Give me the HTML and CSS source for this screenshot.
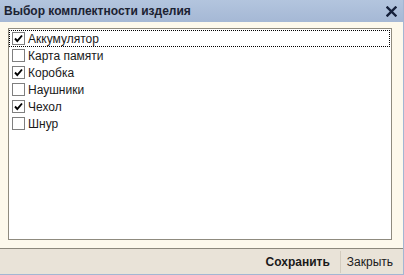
FILE: index.html
```html
<!DOCTYPE html>
<html>
<head>
<meta charset="utf-8">
<link rel="stylesheet" href="styles.css">
</head>
<body>
<div class="window">
  <div class="title">
    <span class="title-text">Выбор комплектности изделия</span>
    <svg class="close" width="11" height="11" viewBox="0 0 11 11"><path d="M1.5 1.5 L9.5 9.5 M9.5 1.5 L1.5 9.5" stroke="#15203a" stroke-width="2.4" stroke-linecap="square"/></svg>
  </div>
  <div class="content">
    <div class="list">
      <div class="row focus"><span class="cb checked"><svg width="9" height="9" viewBox="0 0 9 9"><path d="M1 4.5 L3.3 7 L8 1.5" fill="none" stroke="#000" stroke-width="1.9"/></svg></span><span class="label">Аккумулятор</span></div>
      <div class="row"><span class="cb"></span><span class="label">Карта памяти</span></div>
      <div class="row"><span class="cb checked"><svg width="9" height="9" viewBox="0 0 9 9"><path d="M1 4.5 L3.3 7 L8 1.5" fill="none" stroke="#000" stroke-width="1.9"/></svg></span><span class="label">Коробка</span></div>
      <div class="row"><span class="cb"></span><span class="label">Наушники</span></div>
      <div class="row"><span class="cb checked"><svg width="9" height="9" viewBox="0 0 9 9"><path d="M1 4.5 L3.3 7 L8 1.5" fill="none" stroke="#000" stroke-width="1.9"/></svg></span><span class="label">Чехол</span></div>
      <div class="row"><span class="cb"></span><span class="label">Шнур</span></div>
    </div>
  </div>
  <div class="footer">
    <span class="btn bold">Сохранить</span>
    <span class="sep"></span>
    <span class="btn">Закрыть</span>
  </div>
</div>
</body>
</html>
```
FILE: styles.css
```css
html, body {
  margin: 0;
  padding: 0;
  background: #ffffff;
}
body {
  width: 404px;
  height: 275px;
  overflow: hidden;
  font-family: "Liberation Sans", Arial, sans-serif;
  font-size: 12px;
  color: #1a1a1a;
}
.window {
  width: 403px;
  height: 274px;
  border-right: 1px solid #a3b6d3;
  border-bottom: 1px solid #a3b6d3;
  display: flex;
  flex-direction: column;
}
.title {
  height: 22px;
  flex: none;
  background: linear-gradient(#b3c5de, #a5b8d5);
  display: flex;
  align-items: center;
  justify-content: space-between;
  padding: 0 6px 0 4px;
}
.title-text {
  font-weight: bold;
  font-size: 12px;
  color: #1b2232;
}
.close {
  display: block;
  margin-top: 1px;
}
.content {
  height: 227px;
  flex: none;
  box-sizing: border-box;
  background: #fdf9ec;
  padding: 6px 11px 8px 8px;
  border-bottom: 1px solid #8c887c;
}
.list {
  height: 100%;
  box-sizing: border-box;
  background: #ffffff;
  border: 1px solid #8f8b7f;
  padding: 1px 1px 0 0;
}
.row {
  height: 17px;
  box-sizing: border-box;
  display: flex;
  align-items: center;
  padding-left: 2px;
  border: 1px dotted transparent;
}
.row.focus {
  border: 1px dotted #000;
}
.cb {
  width: 11px;
  height: 11px;
  border: 1px solid #7f7f7f;
  background: #fff;
  display: flex;
  align-items: center;
  justify-content: center;
  flex: none;
}
.label {
  margin-left: 3px;
  line-height: 15px;
  padding-top: 1px;
}
.footer {
  flex: 1;
  background: #e9e3d8;
  display: flex;
  align-items: center;
  justify-content: flex-end;
  padding-right: 10px;
}
.btn {
  font-size: 12px;
  color: #1a1a1a;
}
.btn.bold {
  font-weight: bold;
}
.sep {
  width: 1px;
  height: 22px;
  background: #d3ccbf;
  margin: 0 6px 0 10px;
}
```
